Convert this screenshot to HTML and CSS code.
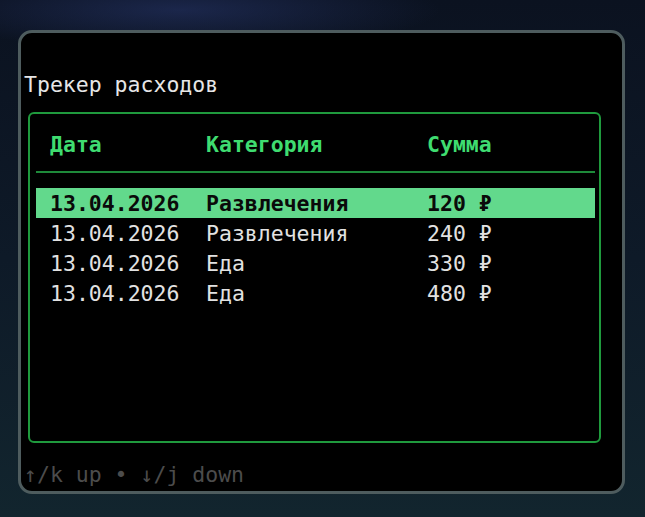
FILE: index.html
```html
<!DOCTYPE html>
<html lang="ru">
<head>
<meta charset="utf-8">
<title>Трекер расходов</title>
<link rel="stylesheet" href="styles.css">
</head>
<body>
<div class="frame">
  <div class="title">Трекер расходов</div>
  <div class="box">
    <div class="table">
      <div class="row head">
        <span>Дата</span><span>Категория</span><span>Сумма</span>
      </div>
      <div class="sep"></div>
      <div class="row sel">
        <span>13.04.2026</span><span>Развлечения</span><span>120 ₽</span>
      </div>
      <div class="row">
        <span>13.04.2026</span><span>Развлечения</span><span>240 ₽</span>
      </div>
      <div class="row">
        <span>13.04.2026</span><span>Еда</span><span>330 ₽</span>
      </div>
      <div class="row">
        <span>13.04.2026</span><span>Еда</span><span>480 ₽</span>
      </div>
    </div>
  </div>
  <div class="help">↑/k up • ↓/j down</div>
</div>
</body>
</html>
```
FILE: styles.css
```css
html, body {
  margin: 0;
  height: 100%;
}
body {
  background:
    radial-gradient(ellipse 260px 40px at 180px 10px, rgba(40, 55, 110, 0.55), transparent),
    linear-gradient(180deg, #0b1220 0%, #0e1a28 50%, #12252e 100%);
  padding: 30px 20px 23px 18px;
  box-sizing: border-box;
  font-family: "DejaVu Sans Mono", "Liberation Mono", monospace;
  font-size: 21.5px;
  line-height: 30px;
  color: #e2e2e2;
}
.frame {
  width: 607px;
  height: 464px;
  box-sizing: border-box;
  border: 3px solid #4e5c5e;
  border-radius: 14px;
  background: #000;
  padding: 36px 0 0 3px;
}
.title {
  height: 30px;
  box-sizing: border-box;
  padding-top: 1px;
  color: #e6e6e6;
}
.box {
  margin: 13px 0 16px 4px;
  width: 573px;
  height: 331px;
  box-sizing: border-box;
  border: 2px solid #1f9a3d;
  border-radius: 6px;
  padding: 15px 4px 0 6px;
}
.row {
  display: grid;
  grid-template-columns: 156px 221px 1fr;
  padding: 2px 0 0 14px;
  box-sizing: border-box;
  height: 30px;
  line-height: 28px;
  white-space: pre;
}
.head {
  color: #3fdc70;
  font-weight: bold;
}
.sep {
  height: 2px;
  background: #1e8a3a;
  margin: 12px 0 15px;
}
.sel {
  background: #62d98c;
  color: #0a0a0a;
  font-weight: bold;
}
.help {
  color: #4c4c4c;
  height: 30px;
  box-sizing: border-box;
  padding-top: 1px;
}
```
